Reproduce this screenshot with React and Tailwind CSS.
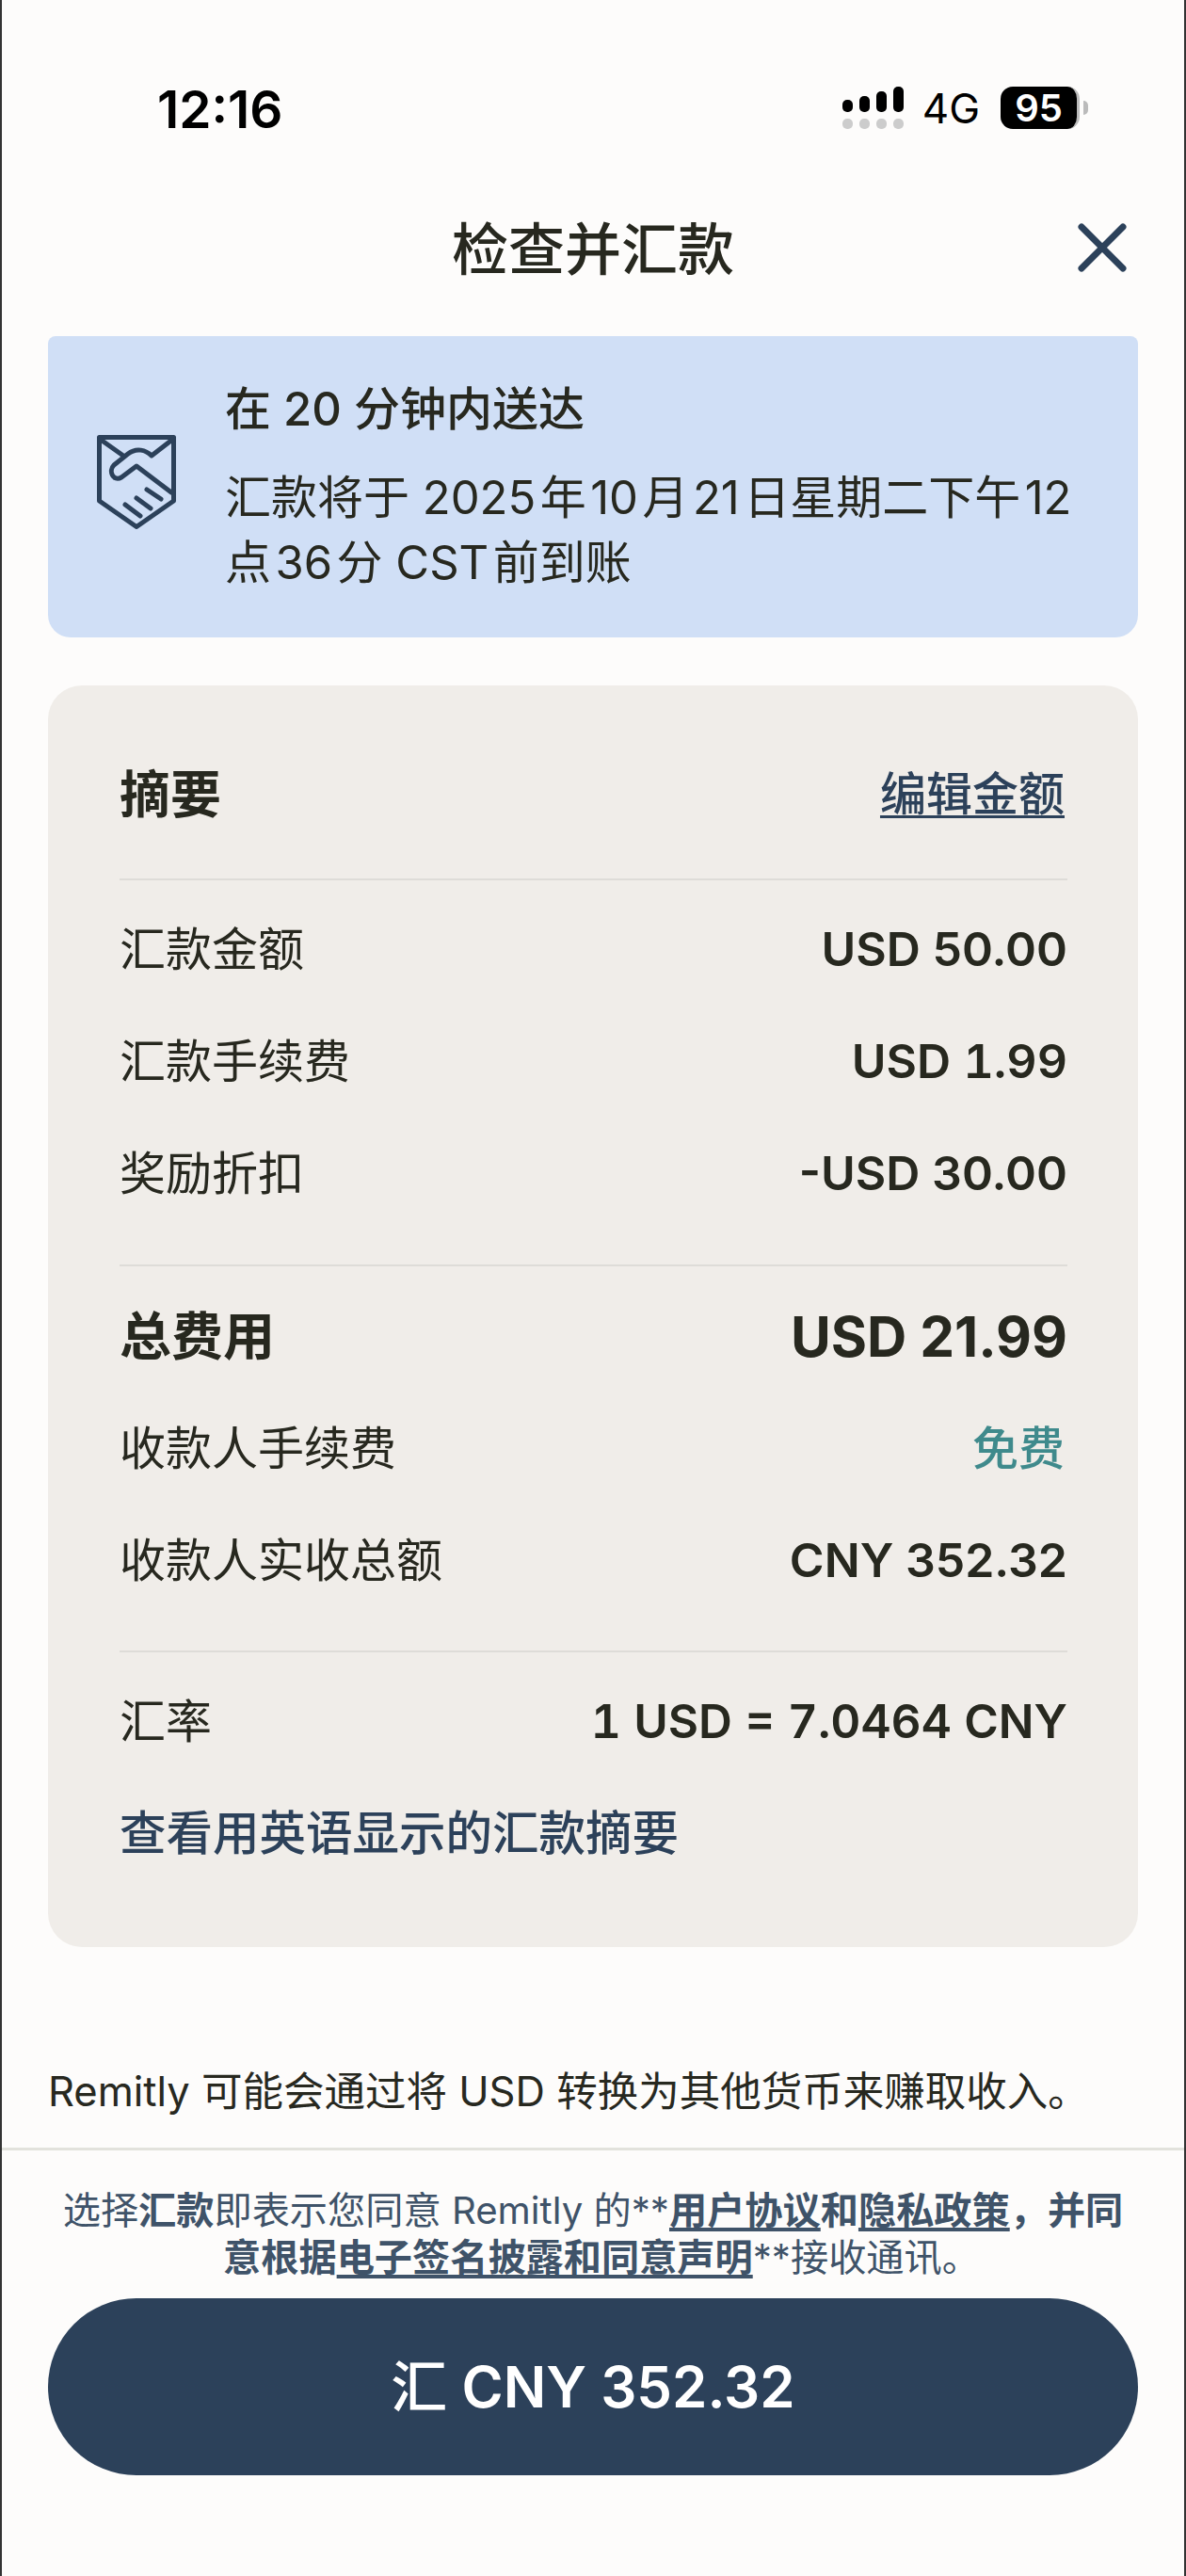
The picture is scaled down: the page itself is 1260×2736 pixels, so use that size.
const cjk = "font-['Inter','Noto_Sans_CJK_SC',sans-serif]";

function Row({ label, value, valueClass = "" }) {
  return (
    <div className="flex h-[119px] items-center justify-between text-[49px]">
      <span>{label}</span>
      <span className={`text-[50px] font-semibold ${valueClass}`}>{value}</span>
    </div>
  );
}

function HandshakeIcon() {
  return (
    <svg className="mb-[10px] shrink-0" width="84" height="100" viewBox="0 0 84 100" fill="none" stroke="#2c415a" strokeWidth="5" strokeLinejoin="round" strokeLinecap="round">
      <path d="M2.5 2.5H81.5V70L42 97.5L2.5 70Z" />
      <path d="M4 5L28 22M80 5L58 22C52 16 42 13 33 20L18 32C12 38 17 50 26 45L42 33L79 61" />
      <path d="M53 58L68 68M42 67L57 78M30 74L46 86" />
    </svg>
  );
}

export default function App() {
  return (
    <div className={`${cjk} h-[2736px] w-[1260px] overflow-hidden border-x-2 border-[#333] bg-[#fdfcfb] text-[#27281f]`}>
      <div className="flex h-[232px] items-start justify-between pl-[165px] pr-[102px] pt-[84px]">
        <span className="text-[55px] font-semibold leading-[64px] text-black">12:16</span>
        <div className="flex items-center pt-[8px] text-black">
          <svg width="65" height="45" viewBox="0 0 65 45" fill="none">
            <rect x="0" y="14" width="11" height="13" rx="5" fill="#000" />
            <rect x="18" y="10" width="11" height="17" rx="5" fill="#000" />
            <rect x="36" y="5" width="11" height="22" rx="5" fill="#000" />
            <rect x="54" y="0" width="11" height="27" rx="5" fill="#000" />
            <rect x="0" y="34" width="11" height="11" rx="5" fill="#ccc" />
            <rect x="18" y="34" width="11" height="11" rx="5" fill="#ccc" />
            <rect x="36" y="34" width="11" height="11" rx="5" fill="#ccc" />
            <rect x="54" y="34" width="11" height="11" rx="5" fill="#ccc" />
          </svg>
          <span className="ml-[20px] text-[44px] leading-none">4G</span>
          <div className="ml-[22px] flex h-[45px] w-[84px] items-center justify-center rounded-[13px] border-r-[3px] border-[#bbb] bg-black text-[40px] font-semibold leading-[45px] text-white">95</div>
          <div className="ml-[4px] h-[15px] w-[5px] rounded-r-full bg-[#bbb]" />
        </div>
      </div>

      <div className="relative flex h-[125px] items-start justify-center">
        <h1 className="text-[60px] font-medium leading-[66px]">检查并汇款</h1>
        <svg className="absolute right-[61px] top-[5px]" width="52" height="52" viewBox="0 0 52 52" fill="none" stroke="#2c415a" strokeWidth="7" strokeLinecap="round">
          <path d="M4 4L48 48M48 4L4 48" />
        </svg>
      </div>

      <div className="mx-[49px] flex h-[320px] items-center rounded-b-[24px] rounded-t-[8px] bg-[#d0dff6] pl-[52px] pr-[30px]">
        <HandshakeIcon />
        <div className="ml-[52px] flex-1">
          <div className="text-[49px] font-medium leading-[64px]">在 20 分钟内送达</div>
          <div className="mt-[27px] whitespace-nowrap text-[49px] leading-[69px]">
            汇款将于 2025{"\u200a"}年{"\u200a"}10{"\u200a"}月{"\u200a"}21{"\u200a"}日星期二下午{"\u200a"}12
            <br />
            点{"\u200a"}36{"\u200a"}分 CST{"\u200a"}前到账
          </div>
        </div>
      </div>

      <div className="mx-[49px] mt-[51px] h-[1340px] rounded-[36px] bg-[#f0ede9] pl-[76px] pr-[75px] pt-[58px]">
        <div className="flex h-[116px] items-center justify-between">
          <span className="text-[54px] font-semibold">摘要</span>
          <span className="pr-[3px] text-[49px] font-medium text-[#2c415a] underline decoration-[3px] underline-offset-[5px]">编辑金额</span>
        </div>
        <div className="mt-[31px] h-[2px] bg-[#dedcd8]" />
        <div className="pt-[14px]">
          <Row label="汇款金额" value="USD 50.00" />
          <Row label="汇款手续费" value="USD 1.99" valueClass="tabular-nums" />
          <Row label="奖励折扣" value="-USD 30.00" />
        </div>
        <div className="mt-[37px] h-[2px] bg-[#dedcd8]" />
        <div className="pt-[15px]">
          <div className="flex h-[119px] items-center justify-between">
            <span className="text-[55px] font-semibold">总费用</span>
            <span className="text-[58.5px] font-bold">USD 21.99</span>
          </div>
          <Row label="收款人手续费" value="免费" valueClass="!text-[49px] !font-medium pr-[3px] text-[#3f8a8c]" />
          <Row label="收款人实收总额" value="CNY 352.32" />
        </div>
        <div className="mt-[36px] h-[2px] bg-[#dedcd8]" />
        <div className="pt-[14px]">
          <Row label="汇率" value="1 USD = 7.0464 CNY" valueClass="!text-[49.7px] tabular-nums" />
          <div className="text-[49.5px] font-medium leading-[119px] text-[#2c415a]">查看用英语显示的汇款摘要</div>
        </div>
      </div>

      <p className="mx-[49px] mt-[121px] text-[43.5px] leading-[64px]">Remitly 可能会通过将 USD 转换为其他货币来赚取收入。</p>
      <div className="mt-[28px] h-[3px] bg-[#e2e2dc]" />
      <div className="px-[49px] pt-[39px]">
        <div className="whitespace-nowrap text-center text-[40.2px] leading-[50px] text-[#3f5369]">
          <div>
            选择<b className="font-semibold">汇款</b>即表示您同意 Remitly 的**<b className="font-semibold underline underline-offset-[4px]">用户协议</b><b className="font-semibold">和</b><b className="font-semibold underline underline-offset-[4px]">隐私政策</b><b className="font-semibold">，并同</b>
          </div>
          <div className="pl-[18px]">
            <b className="font-semibold">意根据</b><b className="font-semibold underline underline-offset-[4px]">电子签名披露和同意声明</b>**接收通讯。
          </div>
        </div>
        <button className="mt-[18px] flex h-[188px] w-full items-center justify-center rounded-full bg-[#2c415a] text-[60px] font-semibold text-white">
          <span className="font-medium">汇</span>&nbsp;CNY 352.32
        </button>
      </div>
    </div>
  );
}
